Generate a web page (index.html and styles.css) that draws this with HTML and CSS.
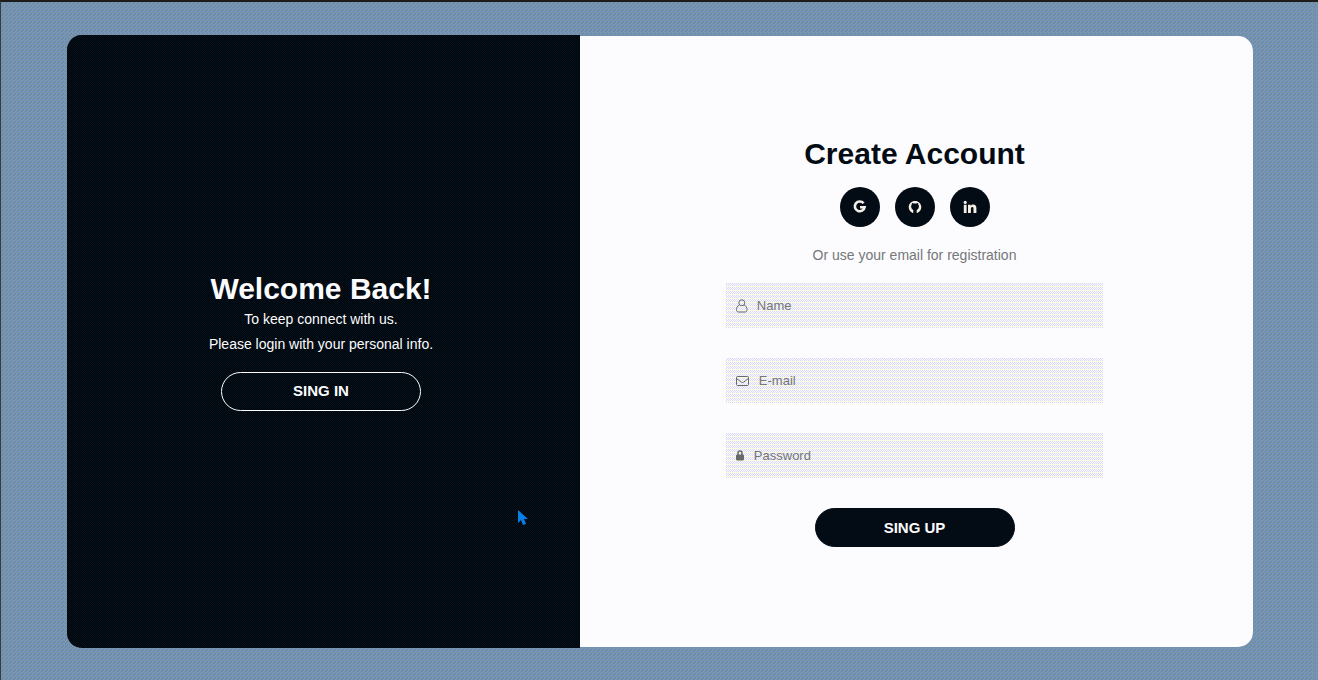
FILE: index.html
```html
<!DOCTYPE html>
<html lang="en">
<head>
<meta charset="utf-8">
<title>Create Account</title>
<link rel="stylesheet" href="styles.css">
</head>
<body>
<main class="card">
  <section class="welcome">
    <h1 class="title">Welcome Back!</h1>
    <p class="message">To keep connect with us.</p>
    <p class="message">Please login with your personal info.</p>
    <button class="button button-outline" type="button">SING IN</button>
    <svg class="cursor" viewBox="0 0 10 16" aria-hidden="true"><path d="M0 0V13L3 10L5 15L8 14L6 9H10Z" fill="#087fe8"/></svg>
  </section>
  <section class="register">
    <h2 class="title">Create Account</h2>
    <nav class="social" aria-label="Social accounts">
      <a class="social-link" href="#google" aria-label="Google"><svg viewBox="0 0 14 14"><path d="M10.6 3.3A4.9 4.9 0 1 0 11.6 7.2H7" fill="none" stroke="currentColor" stroke-width="2.6"/></svg></a>
      <a class="social-link" href="#github" aria-label="GitHub"><svg viewBox="0 0 24 24"><path fill="currentColor" d="M12 1.5C5.9 1.5 1.2 6.2 1.2 12.2c0 4.8 2.9 8.8 7 10.2.6.1.9-.3.9-.7v-4.6c-1.7-1.2-3.7-2.5-3.7-6.1 0-1.3.5-2.4 1.2-3.2-.2-.7-.2-1.8.2-2.8 1.2 0 2.3.6 3.1 1.2 1.4-.4 2.9-.4 4.3 0 .8-.6 1.9-1.2 3.1-1.2.4 1 .4 2.1.2 2.8.8.8 1.2 1.9 1.2 3.2 0 3.6-2 4.9-3.8 6.1v4.6c0 .4.3.8.9.7 4.1-1.4 7-5.4 7-10.2 0-6-4.7-10.7-10.8-10.7Z"/></svg></a>
      <a class="social-link" href="#linkedin" aria-label="LinkedIn"><svg viewBox="0 0 14 14"><path fill="currentColor" d="M.8 4.8h2.8V13H.8zM5 4.8h2.7v1.1c.6-.9 1.4-1.3 2.5-1.3 2.1 0 3.2 1.3 3.2 3.6V13h-2.9V8.7c0-1.1-.4-1.7-1.2-1.7-.9 0-1.4.7-1.4 1.8V13H5z"/><circle cx="2.2" cy="2.4" r="1.6" fill="currentColor"/></svg></a>
    </nav>
    <p class="hint">Or use your email for registration</p>
    <form class="form">
      <label class="field"><svg class="icon-user" viewBox="0 0 12 14" aria-hidden="true"><path d="M3.2 6.2C.9 7.2.5 8.9.5 10.7c0 1.5.8 2.3 2 2.3h6.500c1.200 0 2-.8 2-2.300 0-1.800-.4-3.500-2.700-4.500"/><circle cx="5.800" cy="3.800" r="3"/></svg><input class="input" type="text" placeholder="Name" aria-label="Name"></label>
      <label class="field"><svg class="icon-mail" viewBox="0 0 14 12" aria-hidden="true"><rect x=".5" y="1.5" width="12" height="9" rx="1"/><path d="M.7 3.5C3 5 5 7.5 6.5 7.5s3.500-2.500 5.800-4"/></svg><input class="input" type="email" placeholder="E-mail" aria-label="E-mail"></label>
      <label class="field"><svg class="icon-lock" viewBox="0 0 9 12" aria-hidden="true"><path d="M2 5V3a2 2 0 0 1 4 0V5" stroke-width="1.5"/><rect x=".5" y="5" width="7" height="5" rx=".4" fill="currentColor"/></svg><input class="input" type="password" placeholder="Password" aria-label="Password"></label>
      <button class="button button-solid" type="button">SING UP</button>
    </form>
  </section>
</main>
</body>
</html>
```
FILE: styles.css
```css
* { box-sizing: border-box; }
body {
  margin: 0;
  min-height: 100vh;
  display: grid;
  padding: 33px 65px 32px 66px;
  border-top: 2px solid #1c1c1c;
  border-left: 1px solid #343e38;
  background: #7391b2 url("data:image/svg+xml,%3Csvg xmlns='http://www.w3.org/2000/svg' width='4' height='4' shape-rendering='crispEdges'%3E%3Cpath fill='%238096b0' d='M0 0h1v1H0zM2 0h1v1H2zM1 1h1v1H1zM0 2h1v1H0zM3 3h1v1H3z'/%3E%3Cpath fill='%23709078' d='M2 2h1v1H2z'/%3E%3Cpath fill='%23608bb8' d='M3 1h1v1H3zM1 3h1v1H1z'/%3E%3C/svg%3E") 0 0 / 4px 4px;
  font-family: "Liberation Sans", Arial, sans-serif;
}
h1, h2, p { margin: 0; }
.card {
  display: grid;
  grid-template-columns: 513fr 673fr;
  border-radius: 15px;
  overflow: hidden;
}
.welcome, .register {
  display: flex;
  flex-direction: column;
  align-items: center;
  justify-content: center;
}
.welcome {
  position: relative;
  padding: 0 5px 2px 0;
  color: #fcfcfe;
  background: #020508 url("data:image/svg+xml,%3Csvg xmlns='http://www.w3.org/2000/svg' width='4' height='4' shape-rendering='crispEdges'%3E%3Cpath fill='%23041026' d='M0 0h1v1H0zM2 0h1v1H2zM1 1h1v1H1zM3 1h1v1H3zM0 2h1v1H0zM1 3h1v1H1z'/%3E%3Cpath fill='%2308170c' d='M2 2h1v1H2zM3 3h1v1H3z'/%3E%3C/svg%3E") 0 0 / 4px 4px;
}
.title { font-size: 30px; line-height: 36px; }
.message { font-size: 14px; line-height: 25px; }
.button {
  width: 200px;
  height: 39px;
  padding: 0;
  border: 1px solid #fcfcfe;
  border-radius: 20px;
  color: #fcfcfe;
  font: bold 15px/20px "Liberation Sans", Arial, sans-serif;
}
.button-outline { margin-top: 15px; background: transparent; }
.button-solid { border-color: #030b14; background: #030b14; }
.cursor { position: absolute; left: 88%; top: 77.5%; width: 10px; height: 16px; }
.register {
  margin: 1px 0;
  padding-right: 4px;
  border-radius: 0 15px 15px 0;
  color: #030b14;
  background: #fcfcfe;
}
.social { display: flex; gap: 15px; margin-top: 15px; }
.social-link {
  width: 40px;
  height: 40px;
  display: grid;
  place-items: center;
  border-radius: 50%;
  color: #f4efe5;
  background: #030b14;
}
.social-link svg { width: 14px; height: 14px; }
.hint { margin-top: 18px; font-size: 14px; line-height: 20px; color: #75777a; }
.form {
  width: 56.4%;
  display: flex;
  flex-direction: column;
  align-items: center;
  gap: 30px;
  margin-top: 18px;
}
.field {
  width: 100%;
  height: 45px;
  display: flex;
  align-items: center;
  gap: 9px;
  padding: 1px 0 0 10px;
  color: #666967;
  background: #fcfcfe url("data:image/svg+xml,%3Csvg xmlns='http://www.w3.org/2000/svg' width='4' height='4' shape-rendering='crispEdges'%3E%3Cpath fill='%23d8d8fa' d='M0 0h1v1H0zM2 0h1v1H2zM1 1h1v1H1zM3 1h1v1H3zM0 2h1v1H0zM2 2h1v1H2z'/%3E%3Cpath fill='%23fafac8' d='M1 3h1v1H1zM3 3h1v1H3z'/%3E%3C/svg%3E") 0 0 / 4px 4px;
}
.field svg { flex: none; fill: none; stroke: currentColor; }
.icon-user { width: 12px; height: 14px; }
.icon-mail { width: 14px; height: 12px; }
.icon-lock { width: 9px; height: 12px; }
.input {
  flex: 1;
  min-width: 0;
  padding: 0;
  border: 0;
  outline: 0;
  background: transparent;
  color: #333;
  font: 13px/20px "Liberation Sans", Arial, sans-serif;
}
.input::placeholder { color: #757575; opacity: 1; }
```
